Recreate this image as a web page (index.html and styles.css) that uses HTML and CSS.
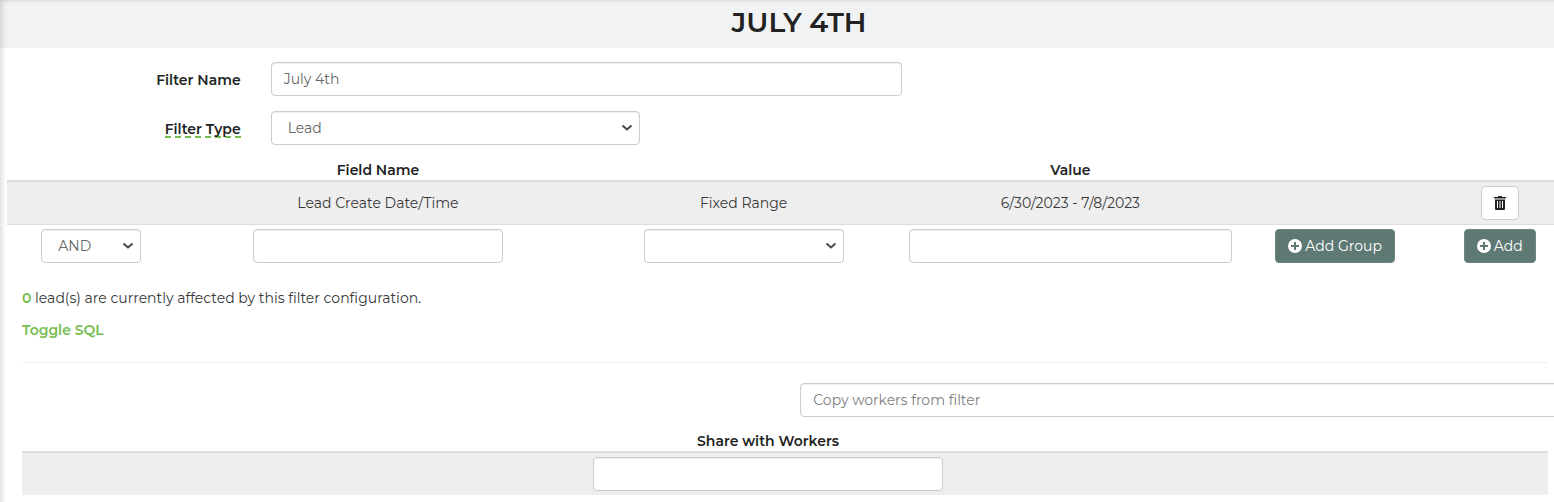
FILE: index.html
```html
<!DOCTYPE html>
<html lang="en">
<head>
<meta charset="utf-8">
<title>July 4th</title>
<link rel="stylesheet" href="styles.css">
</head>
<body>
<svg class="sprite" aria-hidden="true">
  <symbol id="icon-plus" viewBox="0 0 14 14">
    <path fill="currentColor" fill-rule="evenodd" d="M7 0a7 7 0 1 1 0 14A7 7 0 0 1 7 0ZM6 3v3H3v2h3v3h2V8h3V6H8V3Z"/>
  </symbol>
  <symbol id="icon-trash" viewBox="0 0 12 14">
    <path fill="currentColor" fill-rule="evenodd" d="M4 0h4v1h4v1.500H0V1h4ZM1 3.500h10V13q0 1-1 1H2q-1 0-1-1ZM3 5v7h1V5ZM5.500 5v7h1V5ZM8 5v7h1V5Z"/>
  </symbol>
</svg>
<main class="page">
  <header class="page-header"><h1 class="title">JULY 4TH</h1></header>
  <form class="filter">
    <div class="field">
      <label class="field-label" for="filter-name">Filter Name</label>
      <input class="control field-name" id="filter-name" type="text" value="July 4th">
    </div>
    <div class="field">
      <label class="field-label" for="filter-type"><span class="hint">Filter Type</span></label>
      <select class="control field-type" id="filter-type"><option>Lead</option></select>
    </div>
    <table class="grid conditions">
      <colgroup><col class="col-join"><col class="col-field"><col class="col-operator"><col class="col-value"><col class="col-group"><col class="col-action"></colgroup>
      <thead>
        <tr><th></th><th>Field Name</th><th></th><th>Value</th><th></th><th></th></tr>
      </thead>
      <tbody>
        <tr class="shaded">
          <td></td><td>Lead Create Date/Time</td><td>Fixed Range</td><td>6/30/2023 - 7/8/2023</td><td></td>
          <td><button class="button" type="button" aria-label="Delete"><svg class="icon-trash" aria-hidden="true"><use href="#icon-trash"/></svg></button></td>
        </tr>
        <tr>
          <td><select class="control join" aria-label="Join"><option>AND</option></select></td>
          <td><input class="control new-field" type="text" aria-label="Field name"></td>
          <td><select class="control operator" aria-label="Operator"><option></option></select></td>
          <td><input class="control value" type="text" aria-label="Value"></td>
          <td><button class="button primary" type="button"><svg class="icon-plus" aria-hidden="true"><use href="#icon-plus"/></svg>Add Group</button></td>
          <td><button class="button primary" type="button"><svg class="icon-plus" aria-hidden="true"><use href="#icon-plus"/></svg>Add</button></td>
        </tr>
      </tbody>
    </table>
    <section class="summary">
      <p class="line"><b class="count">0</b> lead(s) are currently affected by this filter configuration.</p>
      <p class="line"><a class="toggle" href="#">Toggle SQL</a></p>
      <hr class="rule">
      <div class="copy"><input class="control" type="text" placeholder="Copy workers from filter" aria-label="Copy workers from filter"></div>
      <table class="grid workers">
        <colgroup><col><col class="col-spare"></colgroup>
        <thead><tr><th>Share with Workers</th><th></th></tr></thead>
        <tbody><tr class="shaded"><td><input class="control worker" type="text" aria-label="Share with Workers"></td><td></td></tr></tbody>
      </table>
    </section>
  </form>
</main>
</body>
</html>
```

FILE: styles.css
```css
* { box-sizing: border-box; }

body {
  margin: 0;
  background: #fff;
  color: #383838;
  font: 400 14px/20px Montserrat, Inter, sans-serif;
}

.sprite { display: none; }

.page {
  position: relative;
  min-height: 100vh;
  overflow: hidden;
}

.page::after {
  content: "";
  position: absolute;
  inset: 0 -20px -20px 0;
  box-shadow: inset 2px 0 6px -1px rgba(0, 0, 0, .18), inset 0 1px 1px rgba(0, 0, 0, .03);
  pointer-events: none;
}

.page-header {
  padding: 6px 0 10px 44px;
  background: #f1f2f4;
  text-align: center;
}

.title {
  margin: 0;
  color: #222;
  font-size: 28px;
  font-weight: 600;
  line-height: 32px;
}

.filter { padding: 14px 0 0 7px; }

.field {
  display: flex;
  align-items: center;
  gap: 2px;
  margin: 0 8px 15px 0;
}

.field-label {
  flex: none;
  width: 17%;
  padding: 2px 28px 0 0;
  color: #222;
  font-weight: 600;
  text-align: right;
}

.hint {
  display: inline-block;
  border-bottom: 2px dashed #76bd51;
  line-height: 14px;
}

.control {
  display: inline-block;
  width: 100%;
  height: 34px;
  padding: 6px 12px;
  border: 1px solid #ccc;
  border-radius: 4px;
  background-color: #fff;
  box-shadow: inset 0 1px 1px rgba(0, 0, 0, .075);
  color: #666;
  font: inherit;
  vertical-align: middle;
}

select.control {
  appearance: none;
  padding: 6px 24px 6px 16px;
  background-image: url("data:image/svg+xml,%3Csvg xmlns='http://www.w3.org/2000/svg' width='12' height='8'%3E%3Cpath d='M1.500 1.500 6 5.500l4.500-4' fill='none' stroke='%23484848' stroke-width='2'/%3E%3C/svg%3E");
  background-position: right 6px center;
  background-repeat: no-repeat;
}

.control::placeholder { color: #808080; }

.field-name { width: 41%; }
.field-type { width: 24%; }

.grid {
  border-collapse: separate;
  border-spacing: 0;
  table-layout: fixed;
  text-align: center;
}

.grid th {
  height: 22px;
  padding: 0;
  border-bottom: 2px solid #ddd;
  color: #222;
  font-weight: 600;
}

.grid td { padding: 4px 0; }
.shaded { background: #eee; }

.conditions {
  width: calc(100% + 9px);
  margin-bottom: 21px;
}

.conditions .shaded td { border-bottom: 1px solid #ddd; }

.col-join { width: 168px; }
.col-field { width: 26%; }
.col-operator { width: 21%; }
.col-value { width: 21%; }
.col-group { width: 202px; }
.col-action { width: 126px; }
.col-spare { width: 34px; }

.join { width: 100px; }
.new-field { width: 250px; }
.operator { width: 200px; }
.value { width: 323px; }
.worker { width: 350px; }

.button {
  display: inline-flex;
  align-items: center;
  gap: 3px;
  height: 34px;
  padding: 0 12px;
  border: 1px solid #ccc;
  border-radius: 4px;
  background: #fff;
  color: #222;
  font: inherit;
  vertical-align: middle;
}

.primary {
  border-color: #6b857f;
  background: #5e7974;
  color: #fff;
}

.icon-plus { width: 14px; height: 14px; }
.icon-trash { width: 12px; height: 14px; }

.summary { padding: 0 6px 8px 15px; }
.line { margin: 0 0 12px; }
.count, .toggle { color: #76bd51; font-weight: 600; }
.toggle { text-decoration: none; }

.rule {
  margin: 22px 0 20px;
  border: 0;
  border-top: 1px solid #eee;
}

.copy { margin: 0 -30px 14px 51%; }
.workers { width: 100%; }
```
